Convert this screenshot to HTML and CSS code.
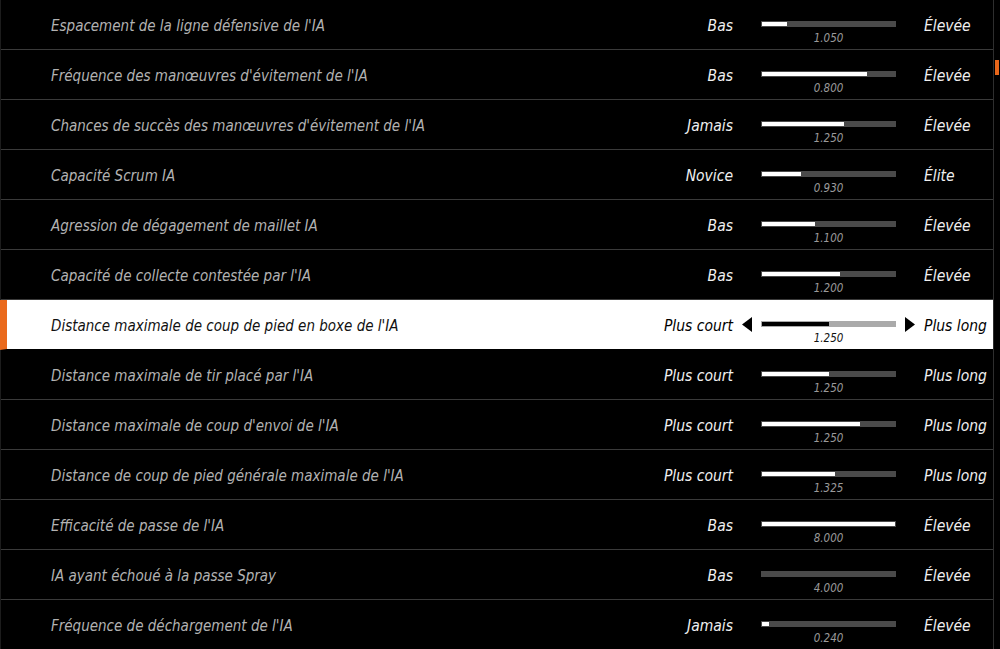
FILE: index.html
```html
<!DOCTYPE html>
<html lang="fr">
<head>
<meta charset="utf-8">
<title>Paramètres IA</title>
<link rel="stylesheet" href="styles.css">
</head>
<body>
<div class="screen">
  <div class="list">
    <div class="row">
      <div class="label">Espacement de la ligne défensive de l'IA</div>
      <div class="lo">Bas</div><div class="arrow"></div>
      <div class="slider"><div class="track"><div class="fill" style="width:19%"></div></div><div class="val">1.050</div></div>
      <div class="arrow"></div><div class="hi">Élevée</div>
    </div>
    <div class="row">
      <div class="label">Fréquence des manœuvres d'évitement de l'IA</div>
      <div class="lo">Bas</div><div class="arrow"></div>
      <div class="slider"><div class="track"><div class="fill" style="width:79%"></div></div><div class="val">0.800</div></div>
      <div class="arrow"></div><div class="hi">Élevée</div>
    </div>
    <div class="row">
      <div class="label">Chances de succès des manœuvres d'évitement de l'IA</div>
      <div class="lo">Jamais</div><div class="arrow"></div>
      <div class="slider"><div class="track"><div class="fill" style="width:62%"></div></div><div class="val">1.250</div></div>
      <div class="arrow"></div><div class="hi">Élevée</div>
    </div>
    <div class="row">
      <div class="label">Capacité Scrum IA</div>
      <div class="lo">Novice</div><div class="arrow"></div>
      <div class="slider"><div class="track"><div class="fill" style="width:29%"></div></div><div class="val">0.930</div></div>
      <div class="arrow"></div><div class="hi">Élite</div>
    </div>
    <div class="row">
      <div class="label">Agression de dégagement de maillet IA</div>
      <div class="lo">Bas</div><div class="arrow"></div>
      <div class="slider"><div class="track"><div class="fill" style="width:40%"></div></div><div class="val">1.100</div></div>
      <div class="arrow"></div><div class="hi">Élevée</div>
    </div>
    <div class="row">
      <div class="label">Capacité de collecte contestée par l'IA</div>
      <div class="lo">Bas</div><div class="arrow"></div>
      <div class="slider"><div class="track"><div class="fill" style="width:59%"></div></div><div class="val">1.200</div></div>
      <div class="arrow"></div><div class="hi">Élevée</div>
    </div>
    <div class="row active">
      <div class="label">Distance maximale de coup de pied en boxe de l'IA</div>
      <div class="lo">Plus court</div>
      <div class="arrow"><svg width="10" height="15" viewBox="0 0 10 15"><polygon points="10,0 10,15 0,7.5"/></svg></div>
      <div class="slider"><div class="track"><div class="fill" style="width:50%"></div></div><div class="val">1.250</div></div>
      <div class="arrow"><svg width="10" height="15" viewBox="0 0 10 15"><polygon points="0,0 0,15 10,7.5"/></svg></div>
      <div class="hi">Plus long</div>
    </div>
    <div class="row">
      <div class="label">Distance maximale de tir placé par l'IA</div>
      <div class="lo">Plus court</div><div class="arrow"></div>
      <div class="slider"><div class="track"><div class="fill" style="width:50%"></div></div><div class="val">1.250</div></div>
      <div class="arrow"></div><div class="hi">Plus long</div>
    </div>
    <div class="row">
      <div class="label">Distance maximale de coup d'envoi de l'IA</div>
      <div class="lo">Plus court</div><div class="arrow"></div>
      <div class="slider"><div class="track"><div class="fill" style="width:74%"></div></div><div class="val">1.250</div></div>
      <div class="arrow"></div><div class="hi">Plus long</div>
    </div>
    <div class="row">
      <div class="label">Distance de coup de pied générale maximale de l'IA</div>
      <div class="lo">Plus court</div><div class="arrow"></div>
      <div class="slider"><div class="track"><div class="fill" style="width:55%"></div></div><div class="val">1.325</div></div>
      <div class="arrow"></div><div class="hi">Plus long</div>
    </div>
    <div class="row">
      <div class="label">Efficacité de passe de l'IA</div>
      <div class="lo">Bas</div><div class="arrow"></div>
      <div class="slider"><div class="track"><div class="fill" style="width:100%"></div></div><div class="val">8.000</div></div>
      <div class="arrow"></div><div class="hi">Élevée</div>
    </div>
    <div class="row">
      <div class="label">IA ayant échoué à la passe Spray</div>
      <div class="lo">Bas</div><div class="arrow"></div>
      <div class="slider"><div class="track"><div class="fill" style="width:0%"></div></div><div class="val">4.000</div></div>
      <div class="arrow"></div><div class="hi">Élevée</div>
    </div>
    <div class="row">
      <div class="label">Fréquence de déchargement de l'IA</div>
      <div class="lo">Jamais</div><div class="arrow"></div>
      <div class="slider"><div class="track"><div class="fill" style="width:5%"></div></div><div class="val">0.240</div></div>
      <div class="arrow"></div><div class="hi">Élevée</div>
    </div>
  </div>
  <div class="scrollbar"><div class="thumb"></div></div>
</div>
</body>
</html>
```
FILE: styles.css
```css
html, body {
  margin: 0;
  padding: 0;
  background: #000;
}
body {
  font-family: "DejaVu Sans Condensed", "DejaVu Sans", sans-serif;
  font-style: italic;
  overflow: hidden;
}
.screen {
  display: flex;
  width: 1000px;
  height: 649px;
  overflow: hidden;
}
.list {
  width: 993px;
  flex: none;
  border-left: 1px solid #1c1c1c;
  box-sizing: border-box;
}
.row {
  display: grid;
  grid-template-columns: 1fr 121px 28px 135px 28px 69px;
  align-items: center;
  height: 50px;
  box-sizing: border-box;
  padding-left: 50px;
  border-bottom: 1px solid #3a3a3a;
  color: #f0f0f0;
}
.label {
  color: #b2b2b2;
  font-size: 15px;
  padding-top: 2px;
  white-space: nowrap;
}
.lo {
  text-align: right;
  font-size: 15.5px;
  padding-top: 2px;
  white-space: nowrap;
}
.hi {
  font-size: 15.5px;
  padding-top: 2px;
  white-space: nowrap;
}
.arrow {
  display: flex;
  justify-content: center;
  align-items: center;
  height: 15px;
}
.arrow svg {
  display: block;
  fill: #000;
}
.slider {
  align-self: start;
  padding-top: 21px;
}
.track {
  height: 6px;
  background: #4a4a4a;
  padding: 1px;
  box-sizing: border-box;
}
.fill {
  height: 4px;
  background: #fff;
}
.val {
  margin-top: 5px;
  text-align: center;
  font-size: 11.5px;
  line-height: 13px;
  color: #9a9a9a;
}
.row.active {
  background: #fff;
  border-left: 7px solid #ea6a1c;
  margin-left: -1px;
  padding-left: 44px;
  border-bottom-color: #000;
  color: #000;
}
.row.active .label {
  color: #111;
}
.row.active .track {
  background: #aaa;
}
.row.active .fill {
  background: #000;
}
.row.active .val {
  color: #111;
}
.scrollbar {
  flex: 1;
  border-left: 1px solid #2e2e2e;
  padding-left: 1px;
  padding-top: 60px;
  box-sizing: border-box;
}
.thumb {
  width: 4px;
  height: 15px;
  background: #e8661a;
}
```
